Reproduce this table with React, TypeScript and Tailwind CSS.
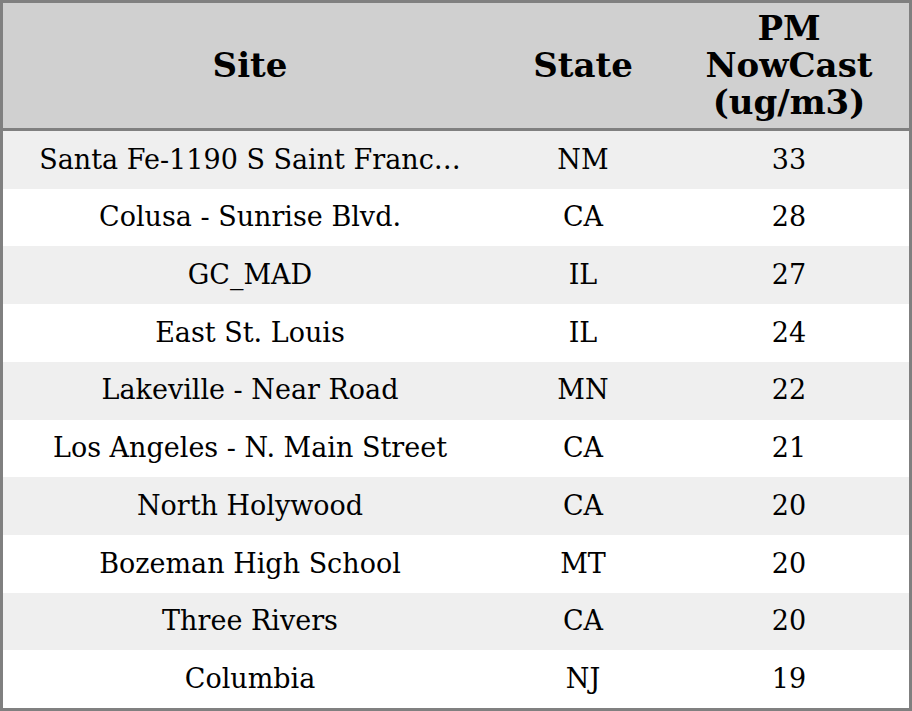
import React from "react";

const rows: [string, string, string][] = [
  ["Santa Fe-1190 S Saint Franc\u2026", "NM", "33"],
  ["Colusa - Sunrise Blvd.", "CA", "28"],
  ["GC_MAD", "IL", "27"],
  ["East St. Louis", "IL", "24"],
  ["Lakeville - Near Road", "MN", "22"],
  ["Los Angeles - N. Main Street", "CA", "21"],
  ["North Holywood", "CA", "20"],
  ["Bozeman High School", "MT", "20"],
  ["Three Rivers", "CA", "20"],
  ["Columbia", "NJ", "19"],
];

export default function App() {
  return (
    <div
      className="w-[912px] h-[711px] bg-white border-[3px] border-[#808080] flex flex-col text-black"
      style={{ fontFamily: '"DejaVu Serif", serif' }}
    >
      <div className="h-[128px] shrink-0 bg-[#d0d0d0] border-b-[3px] border-[#808080] grid grid-cols-[494px_172px_1fr] items-center text-[34px] font-bold leading-[37px] text-center">
        <div>Site</div>
        <div>State</div>
        <div>
          PM
          <br />
          NowCast
          <br />
          (ug/m3)
        </div>
      </div>
      <div className="flex-1 flex flex-col">
        {rows.map((r, i) => (
          <div
            key={i}
            className={`flex-1 grid grid-cols-[494px_172px_1fr] items-center text-center text-[27px] ${
              i % 2 === 0 ? "bg-[#efefef]" : "bg-white"
            }`}
          >
            <div>{r[0]}</div>
            <div>{r[1]}</div>
            <div>{r[2]}</div>
          </div>
        ))}
      </div>
    </div>
  );
}
